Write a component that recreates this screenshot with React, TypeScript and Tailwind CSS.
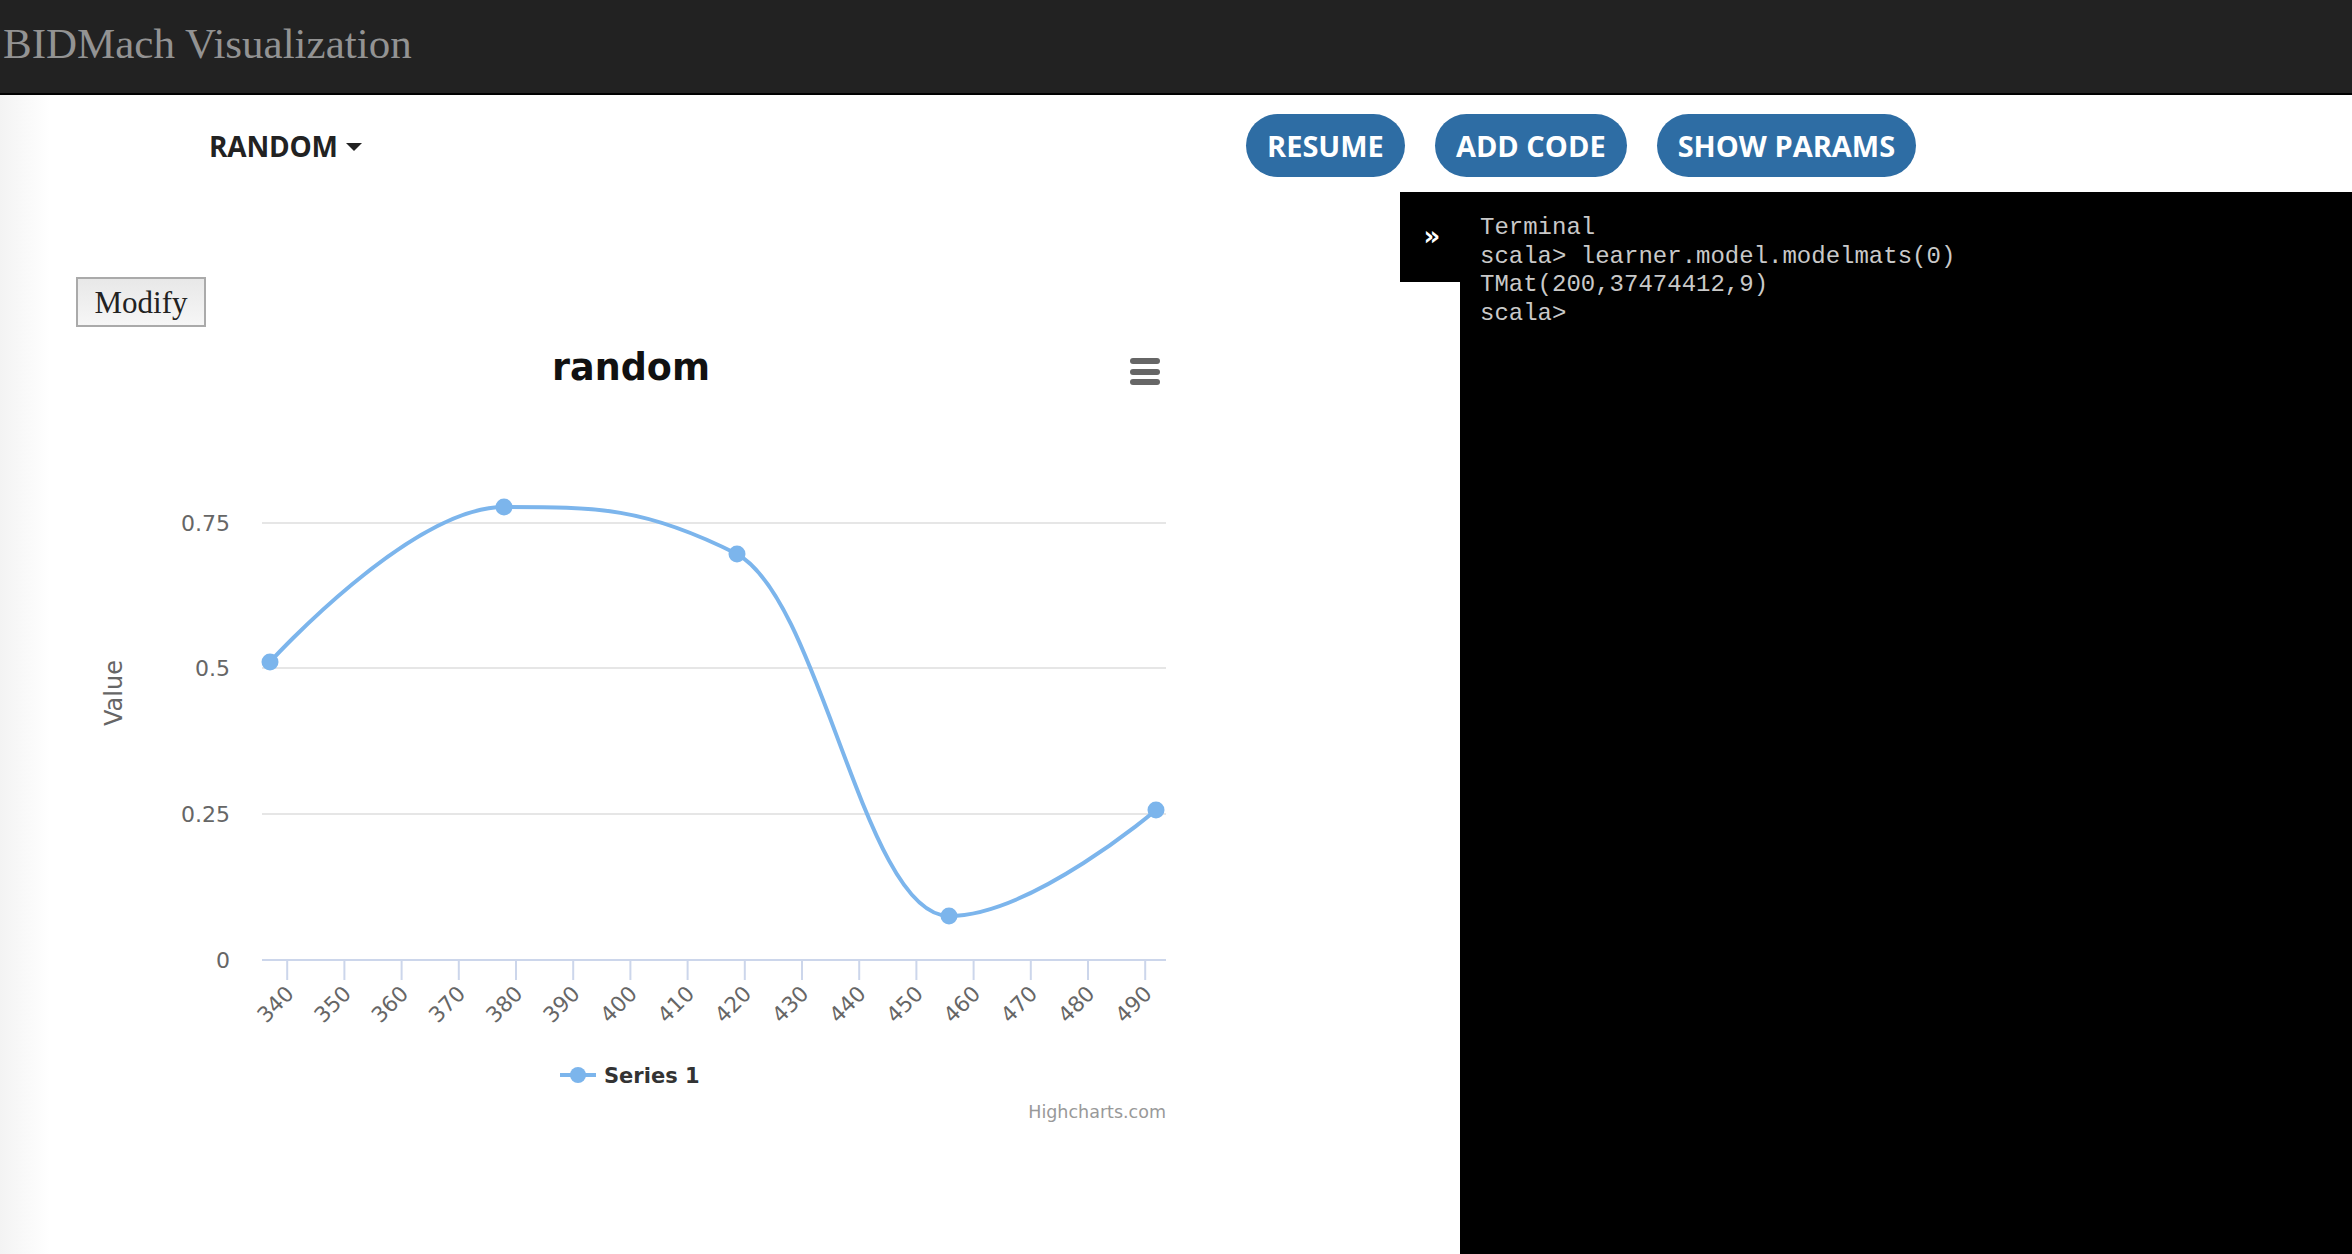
import React from "react";

type Pt = { x: number; y: number };

// plot pixel positions of the five samples (chart-local coords)
const points: Pt[] = [
  { x: 194, y: 335 },
  { x: 428, y: 180 },
  { x: 661, y: 227 },
  { x: 873, y: 589 },
  { x: 1080, y: 483 },
];

const gridY = [633, 487, 341, 196];
const yLabels = ["0", "0.25", "0.5", "0.75"];
const ticks = Array.from({ length: 16 }, (_, i) => ({ x: 211.2 + i * 57.2, label: String(340 + i * 10) }));

// highcharts-style spline
function splinePath(pts: Pt[]) {
  const s = 1.5;
  const d = s + 1;
  const ctrl = pts.map((p, i) => {
    const prev = pts[i - 1];
    const next = pts[i + 1];
    if (!prev || !next) return null;
    const lx = (s * p.x + prev.x) / d;
    let ly = (s * p.y + prev.y) / d;
    const rx = (s * p.x + next.x) / d;
    let ry = (s * p.y + next.y) / d;
    const corr = ((ry - ly) * (rx - p.x)) / (rx - lx) + p.y - ry;
    ly += corr;
    ry += corr;
    if (ly > prev.y && ly > p.y) { ly = Math.max(prev.y, p.y); ry = 2 * p.y - ly; }
    else if (ly < prev.y && ly < p.y) { ly = Math.min(prev.y, p.y); ry = 2 * p.y - ly; }
    if (ry > next.y && ry > p.y) { ry = Math.max(next.y, p.y); ly = 2 * p.y - ry; }
    else if (ry < next.y && ry < p.y) { ry = Math.min(next.y, p.y); ly = 2 * p.y - ry; }
    return { lx, ly, rx, ry };
  });
  let out = `M ${pts[0].x} ${pts[0].y}`;
  for (let i = 1; i < pts.length; i++) {
    const a = ctrl[i - 1];
    const b = ctrl[i];
    const p = pts[i];
    const q = pts[i - 1];
    out += ` C ${a ? a.rx : q.x} ${a ? a.ry : q.y} ${b ? b.lx : p.x} ${b ? b.ly : p.y} ${p.x} ${p.y}`;
  }
  return out;
}

function Chart() {
  const font = "'DejaVu Sans', Verdana, sans-serif";
  return (
    <svg width="1110" height="800" viewBox="0 0 1110 800" className="block" style={{ fontFamily: font }}>
      <text x="555" y="53" textAnchor="middle" fontSize="36.5" fontWeight="700" fill="#111">random</text>
      <g stroke="#666" strokeWidth="6" strokeLinecap="round">
        <line x1="1057" y1="34" x2="1081" y2="34" />
        <line x1="1057" y1="45" x2="1081" y2="45" />
        <line x1="1057" y1="55" x2="1081" y2="55" />
      </g>
      {gridY.slice(1).map((y) => (
        <line key={y} x1="186" x2="1090" y1={y} y2={y} stroke="#e6e6e6" strokeWidth="2" />
      ))}
      {gridY.map((y, i) => (
        <text key={y} x="154" y={y + 8} textAnchor="end" fontSize="22" fill="#666">{yLabels[i]}</text>
      ))}
      <text x="46" y="366" textAnchor="middle" fontSize="24" fill="#666" transform="rotate(-90 46 366)">Value</text>
      <line x1="186" x2="1090" y1="633" y2="633" stroke="#ccd6eb" strokeWidth="2" />
      {ticks.map((t) => (
        <g key={t.label}>
          <line x1={t.x} x2={t.x} y1="633" y2="653" stroke="#ccd6eb" strokeWidth="2" />
          <text x={t.x + 8} y="668" textAnchor="end" fontSize="21.5" fill="#666" transform={`rotate(-45 ${t.x + 8} 668)`}>{t.label}</text>
        </g>
      ))}
      <path d={splinePath(points)} fill="none" stroke="#7cb5ec" strokeWidth="4" strokeLinejoin="round" />
      {points.map((p) => (
        <circle key={p.x} cx={p.x} cy={p.y} r="8.5" fill="#7cb5ec" />
      ))}
      <line x1="484" x2="520" y1="748" y2="748" stroke="#7cb5ec" strokeWidth="4" />
      <circle cx="502" cy="748" r="8" fill="#7cb5ec" />
      <text x="528" y="756" fontSize="21" fontWeight="700" fill="#333">Series 1</text>
      <text x="1090" y="791" textAnchor="end" fontSize="17.5" fill="#999">Highcharts.com</text>
    </svg>
  );
}

export default function App() {
  return (
    <div className="h-screen w-full flex flex-col overflow-hidden bg-white">
      <header className="h-[95px] shrink-0 bg-[#222] border-b-2 border-black flex items-center pl-[3px] pb-[6px]">
        <h1 className="text-[43px] text-[#939393] font-['Liberation_Serif',serif] leading-none">BIDMach Visualization</h1>
      </header>

      <div className="flex-1 flex flex-col bg-[linear-gradient(to_right,#f3f3f3_0px,#ffffff_50px)] min-h-0">
        <div className="h-[97px] shrink-0 flex items-center pt-[4px] font-['Open_Sans',sans-serif]">
          <div className="w-[1246px] pl-[209px] flex items-center gap-[8px]">
            <span className="text-[28px] font-bold text-[#222] tracking-[-0.2px]">RANDOM</span>
            <span className="w-0 h-0 border-l-[8px] border-r-[8px] border-t-[8px] border-l-transparent border-r-transparent border-t-[#222] mt-[2px]" />
          </div>
          <div className="flex items-center gap-[30px]">
            {["RESUME", "ADD CODE", "SHOW PARAMS"].map((b) => (
              <button key={b} className="h-[63px] px-[21px] rounded-full bg-[#2e6da4] text-white text-[29px] font-bold">
                {b}
              </button>
            ))}
          </div>
        </div>

        <div className="flex-1 flex min-h-0">
          <div className="w-[1400px] shrink-0 pl-[76px] pt-[85px]">
            <button className="h-[50px] w-[130px] border-2 border-[#aaa] bg-[linear-gradient(#e8e8e8,#f6f6f6)] text-[31px] text-[#222] font-['Liberation_Serif',serif] leading-none">
              Modify
            </button>
            <Chart />
          </div>
          <div className="w-[60px] h-[90px] bg-black shrink-0 flex justify-center pt-[30px] pl-[4px]">
            <span className="text-white text-[26px] font-bold font-['DejaVu_Sans',sans-serif] leading-[28px]">»</span>
          </div>
          <div className="flex-1 bg-black pl-[20px] pt-[22px] font-['Liberation_Mono',monospace] text-[24px] leading-[28.5px] text-[#c9c9c9] whitespace-pre">
            <div>Terminal</div>
            <div>scala&gt; learner.model.modelmats(0)</div>
            <div>TMat(200,37474412,9)</div>
            <div>scala&gt;</div>
          </div>
        </div>
      </div>
    </div>
  );
}
